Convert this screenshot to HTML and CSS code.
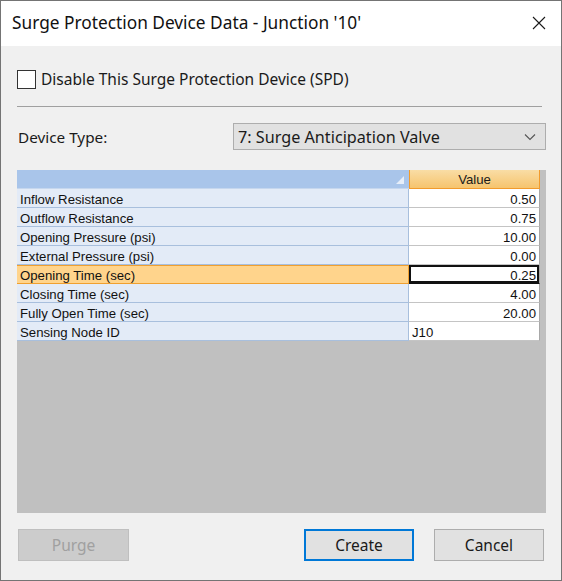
FILE: index.html
```html
<!DOCTYPE html>
<html>
<head>
<meta charset="utf-8">
<link rel="stylesheet" href="styles.css">
</head>
<body>
<div class="dialog">
  <div class="titlebar">
    <span class="title">Surge Protection Device Data - Junction '10'</span>
    <svg class="close" width="14" height="14" viewBox="0 0 14 14"><path d="M1 1 L13 13 M13 1 L1 13" stroke="#1a1a1a" stroke-width="1.1" fill="none"/></svg>
  </div>
  <div class="content">
    <label class="check-row">
      <span class="checkbox"></span>
      <span class="check-label">Disable This Surge Protection Device (SPD)</span>
    </label>
    <div class="separator"></div>
    <div class="type-row">
      <span class="type-label">Device Type:</span>
      <div class="combo">
        <span>7: Surge Anticipation Valve</span>
        <svg class="chev" width="12" height="8" viewBox="0 0 12 8"><path d="M1 1.5 L6 6.5 L11 1.5" stroke="#555" stroke-width="1.1" fill="none"/></svg>
      </div>
    </div>
    <div class="grid-area">
      <div class="grid">
        <div class="hcell hlabel"><span class="sort"></span></div>
        <div class="hcell hvalue">Value</div>

        <div class="lcell">Inflow Resistance</div><div class="vcell">0.50</div>
        <div class="lcell">Outflow Resistance</div><div class="vcell">0.75</div>
        <div class="lcell">Opening Pressure (psi)</div><div class="vcell">10.00</div>
        <div class="lcell">External Pressure (psi)</div><div class="vcell">0.00</div>
        <div class="lcell sel">Opening Time (sec)</div><div class="vcell vsel">0.25</div>
        <div class="lcell">Closing Time (sec)</div><div class="vcell">4.00</div>
        <div class="lcell">Fully Open Time (sec)</div><div class="vcell">20.00</div>
        <div class="lcell">Sensing Node ID</div><div class="vcell vleft">J10</div>
      </div>
    </div>
    <div class="footer">
      <button class="btn disabled">Purge</button>
      <div class="right-btns">
        <button class="btn default">Create</button>
        <button class="btn">Cancel</button>
      </div>
    </div>
  </div>
</div>
</body>
</html>
```

FILE: styles.css
```css
html, body {
  margin: 0;
  padding: 0;
  background: #f0f0f0;
}
.dialog {
  width: 562px;
  height: 581px;
  box-sizing: border-box;
  border: 1px solid #747474;
  background: #f0f0f0;
  display: flex;
  flex-direction: column;
  font-family: "Noto Sans", "Liberation Sans", sans-serif;
  color: #000;
}
.titlebar {
  height: 45px;
  background: #fff;
  display: flex;
  align-items: center;
  justify-content: space-between;
  padding: 0 15px 0 11px;
  flex-shrink: 0;
}
.title {
  font-size: 17.3px;
  margin-top: -2px;
  color: #111;
}
.close {
  margin-top: -1px;
}
.content {
  flex: 1;
  display: flex;
  flex-direction: column;
  padding: 0 15px 0 16px;
}
.check-row {
  display: flex;
  align-items: center;
  margin-top: 23px;
  height: 20px;
}
.checkbox {
  width: 17px;
  height: 17px;
  border: 1px solid #333;
  background: #fff;
  box-sizing: content-box;
}
.check-label {
  font-size: 15.5px;
  margin-left: 5px;
  color: #1a1a1a;
}
.separator {
  height: 1px;
  background: #a0a0a0;
  margin: 17px 4px 0 0;
}
.type-row {
  display: flex;
  align-items: center;
  justify-content: space-between;
  margin-top: 16px;
}
.type-label {
  font-size: 15.3px;
  margin-left: 1px;
  color: #1a1a1a;
}
.combo {
  width: 313px;
  height: 27px;
  box-sizing: border-box;
  border: 1px solid #adadad;
  background: #e1e1e1;
  display: flex;
  align-items: center;
  justify-content: space-between;
  padding: 0 9px 0 4px;
  font-size: 16.2px;
  color: #1a1a1a;
}
.chev {
  margin-top: 1px;
}
.grid-area {
  margin-top: 20px;
  height: 343px;
  background: #c0c0c0;
}
.grid {
  display: grid;
  grid-template-columns: 392px 131px;
  grid-auto-rows: 19px;
  font-family: "Liberation Sans", Arial, sans-serif;
  font-size: 13.2px;
  color: #111;
}
.hcell {
  box-sizing: border-box;
}
.hlabel {
  background: #a9c5ea;
  border-bottom: 1px solid #c6d7ee;
  position: relative;
}
.sort {
  position: absolute;
  right: 5px;
  bottom: 4px;
  width: 0;
  height: 0;
  border-left: 8px solid transparent;
  border-bottom: 8px solid #e6eef9;
}
.hvalue {
  background: linear-gradient(#f9dda5, #f6c46e);
  border: 1px solid #f29b2c;
  border-top: none;
  text-align: center;
  line-height: 19px;
  font-size: 13.2px;
  color: #1a1a1a;
}
.lcell {
  box-sizing: border-box;
  background: #e3ebf7;
  border-bottom: 1px solid #a8bfdd;
  border-right: 1px solid #a8bfdd;
  padding: 2px 0 0 3px;
  line-height: 17px;
  white-space: nowrap;
  overflow: hidden;
}
.lcell.sel {
  background: #ffd48c;
  border-bottom: 1px solid #f0a030;
  border-right: 1px solid #f0a030;
  box-shadow: inset 0 1px 0 #f0a030;
}
.vcell {
  box-sizing: border-box;
  background: #fff;
  border-bottom: 1px solid #c4c4c4;
  border-right: 1px solid #a8a8a8;
  text-align: right;
  padding: 2px 3px 0 0;
  line-height: 17px;
}
.vcell.vsel {
  box-shadow: inset 0 0 0 2px #111;
  border-bottom: 1px solid #111;
}
.vcell.vleft {
  text-align: left;
  padding-left: 3px;
}
.footer {
  display: flex;
  justify-content: space-between;
  margin-top: 16px;
  padding: 0 2px 0 1px;
}
.right-btns {
  display: flex;
  gap: 20px;
}
.btn {
  width: 110px;
  height: 32px;
  box-sizing: border-box;
  border: 1px solid #adadad;
  background: #e1e1e1;
  font-family: "Noto Sans", "Liberation Sans", sans-serif;
  font-size: 15.5px;
  color: #1a1a1a;
  padding: 0;
  margin: 0;
}
.btn.default {
  border: 2px solid #0078d7;
}
.btn.disabled {
  width: 111px;
  background: #cccccc;
  border-color: #bfbfbf;
  color: #a0a0a0;
}
```
